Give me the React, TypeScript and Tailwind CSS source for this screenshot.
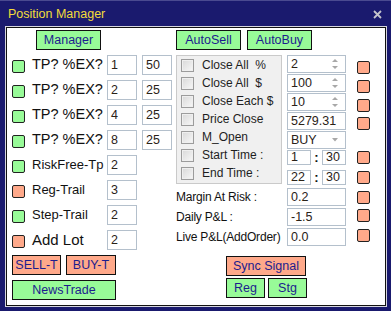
import React from "react";

const FONT = "font-['Liberation_Sans',Arial,sans-serif]";

function Square({ color }: { color: "green" | "red" }) {
  return (
    <div
      className={`w-[13px] h-[13px] shrink-0 rounded-[2px] border border-[#222] ${
        color === "green" ? "bg-[#98fb98]" : "bg-[#ffa98a]"
      }`}
    />
  );
}

function Btn({ label, color, w }: { label: string; color: "green" | "red"; w: string }) {
  return (
    <div
      className={`${w} h-[20px] shrink-0 flex items-center justify-center border border-[#111] text-[12.5px] text-[#1c1c8e] ${
        color === "green" ? "bg-[#98fb98]" : "bg-[#ffa98a]"
      }`}
    >
      {label}
    </div>
  );
}

function Field({ value, w, h = "h-[20px]" }: { value: string; w: string; h?: string }) {
  return (
    <div
      className={`${w} ${h} shrink-0 flex items-center border border-[#b4c0cc] bg-white pl-[3px] text-[12.5px] text-[#2a2218]`}
    >
      {value}
    </div>
  );
}

function Spin({ value }: { value: string }) {
  return (
    <div className="w-[59px] h-[18px] shrink-0 flex items-center justify-between border border-[#b4c0cc] bg-white pl-[3px] pr-[6px] text-[12.5px] text-[#2a2218]">
      <span>{value}</span>
      <svg width="8" height="14" viewBox="0 0 8 14">
        <path d="M1 5 L4 2 L7 5 Z" fill="#a8a8a8" />
        <path d="M1 9 L4 12 L7 9 Z" fill="#a8a8a8" />
      </svg>
    </div>
  );
}

function Check({ label }: { label: string }) {
  return (
    <div className="h-[18px] flex items-center pl-[4px]">
      <div className="w-[13px] h-[13px] shrink-0 border border-[#9c9c9c] bg-gradient-to-br from-[#d8d8d8] to-[#f8f8f8] shadow-[inset_0_0_0_1px_#efefef]" />
      <span className="ml-[8px] text-[12px] text-[#1e1e1e] whitespace-pre">{label}</span>
    </div>
  );
}

const leftRows: { color: "green" | "red"; label: string; size: string; a: string; b?: string }[] = [
  { color: "green", label: "TP? %EX?", size: "text-[14.5px]", a: "1", b: "50" },
  { color: "green", label: "TP? %EX?", size: "text-[14.5px]", a: "2", b: "25" },
  { color: "green", label: "TP? %EX?", size: "text-[14.5px]", a: "4", b: "25" },
  { color: "green", label: "TP? %EX?", size: "text-[14.5px]", a: "8", b: "25" },
  { color: "green", label: "RiskFree-Tp", size: "text-[13px]", a: "2" },
  { color: "red", label: "Reg-Trail", size: "text-[13px]", a: "3" },
  { color: "green", label: "Step-Trail", size: "text-[13px]", a: "2" },
  { color: "red", label: "Add Lot", size: "text-[15px]", a: "2" },
];

export default function App() {
  return (
    <div className={`w-[391px] h-[311px] bg-[#1a1a6e] ${FONT} flex flex-col`}>
      {/* Title bar */}
      <div className="h-[27px] shrink-0 flex items-center justify-between pl-[8px] pr-[9px] border-t border-[#4a4a90]">
        <span className="text-[12.5px] text-[#f2dc3a]">Position Manager</span>
        <svg width="9" height="9" viewBox="0 0 9 9">
          <path d="M1 1 L8 8 M8 1 L1 8" stroke="#c4c4cc" strokeWidth="1.8" />
        </svg>
      </div>

      <div className="ml-[6px] w-[380px] h-[279px] bg-white border border-[#111] shadow-[0_0_0_1px_#d6d6de] flex pl-[5px] pt-[2px]">
        {/* Left column */}
        <div className="w-[160px] shrink-0 flex flex-col">
          <div className="ml-[24px]">
            <Btn label="Manager" color="green" w="w-[65px]" />
          </div>
          <div className="mt-[5px] flex flex-col gap-[5px]">
            {leftRows.map((r, i) => (
              <div key={i} className="h-[20px] flex items-center">
                <div className="mt-[2px]">
                  <Square color={r.color} />
                </div>
                <span className={`ml-[7px] w-[75px] shrink-0 text-[#111] ${r.size}`}>{r.label}</span>
                <Field value={r.a} w="w-[30px]" />
                {r.b && (
                  <div className="ml-[5px]">
                    <Field value={r.b} w="w-[30px]" />
                  </div>
                )}
              </div>
            ))}
          </div>
          <div className="mt-[5px] flex gap-[5px]">
            <Btn label="SELL-T" color="red" w="w-[49px]" />
            <Btn label="BUY-T" color="red" w="w-[50px]" />
          </div>
          <div className="mt-[5px]">
            <Btn label="NewsTrade" color="green" w="w-[104px]" />
          </div>
        </div>

        {/* Right column */}
        <div className="ml-[4px] flex flex-col">
          <div className="flex gap-[6px]">
            <Btn label="AutoSell" color="green" w="w-[65px]" />
            <Btn label="AutoBuy" color="green" w="w-[65px]" />
          </div>

          <div className="mt-[5px] flex">
            <div className="w-[106px] h-[129px] shrink-0 border border-[#cacaca] bg-[#f0f0f0] flex flex-col">
              <Check label="Close All  %" />
              <Check label="Close All  $" />
              <Check label="Close Each $" />
              <Check label="Price Close" />
              <Check label="M_Open" />
              <Check label="Start Time :" />
              <Check label="End Time :" />
            </div>

            <div className="ml-[5px] flex flex-col">
              {["2", "100", "10"].map((v) => (
                <div key={v} className="h-[19px] flex items-start">
                  <Spin value={v} />
                  <div className="ml-[11px] mt-[6px]">
                    <Square color="red" />
                  </div>
                </div>
              ))}
              <div className="h-[19px] flex items-start">
                <Field value="5279.31" w="w-[59px]" h="h-[18px]" />
                <div className="ml-[11px] mt-[5px]">
                  <Square color="red" />
                </div>
              </div>
              <div className="h-[19px] flex items-start">
                <div className="w-[59px] h-[18px] flex items-center justify-between border border-[#b4c0cc] bg-white pl-[3px] pr-[6px] text-[12.5px] text-[#2a2218]">
                  <span>BUY</span>
                  <svg width="8" height="6" viewBox="0 0 8 6">
                    <path d="M1 1 L4 4.5 L7 1 Z" fill="#a8a8a8" />
                  </svg>
                </div>
              </div>
              {[
                ["1", "30"],
                ["22", "30"],
              ].map(([h, m], i) => (
                <div key={i} className={`h-[19px] flex items-start ${i === 1 ? "pt-[1px]" : ""}`}>
                  <Field value={h} w="w-[24px]" h="h-[15px]" />
                  <span className="w-[11px] text-center text-[13px] font-bold leading-[15px] text-[#111]">:</span>
                  <Field value={m} w="w-[24px]" h="h-[15px]" />
                  <div className="ml-[11px] mt-[1px]">
                    <Square color="red" />
                  </div>
                </div>
              ))}
            </div>
          </div>

          {[
            ["Margin At Risk :", "0.2"],
            ["Daily P&L :", "-1.5"],
            ["Live P&L(AddOrder)", "0.0"],
          ].map(([label, v], i) => (
            <div key={label} className="h-[20px] flex items-start">
              <span className="w-[111px] shrink-0 text-[12px] leading-[18px] tracking-[-0.2px] text-[#111] whitespace-nowrap">
                {label}
              </span>
              <Field value={v} w="w-[59px]" h="h-[18px]" />
              <div className={`ml-[11px] ${i === 0 ? "mt-[3px]" : "mt-[1px]"}`}>
                <Square color="red" />
              </div>
            </div>
          ))}

          <div className="mt-[8px] ml-[50px] flex flex-col gap-[2px]">
            <Btn label="Sync Signal" color="red" w="w-[80px]" />
            <div className="flex gap-[3px]">
              <Btn label="Reg" color="green" w="w-[39px]" />
              <Btn label="Stg" color="green" w="w-[39px]" />
            </div>
          </div>
        </div>
      </div>
    </div>
  );
}
